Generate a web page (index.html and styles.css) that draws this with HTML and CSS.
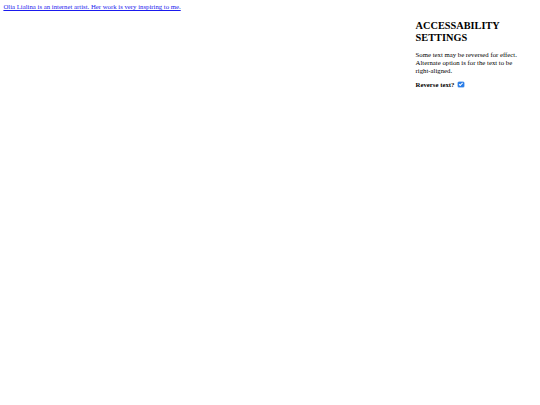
FILE: index.html
```html
<!DOCTYPE html>
<html>
<head>
<meta charset="utf-8">
<link rel="stylesheet" href="styles.css">
</head>
<body>
<div class="page">
  <main class="content">
    <a class="link" href="#">Olia Lialina is an internet artist. Her work is very inspiring to me.</a>
  </main>
  <aside class="settings">
    <h2 class="title">ACCESSABILITY SETTINGS</h2>
    <p class="desc">Some text may be reversed for effect. Alternate option is for the text to be right-aligned.</p>
    <label class="option">Reverse text? <input class="check" type="checkbox" checked></label>
  </aside>
</div>
</body>
</html>
```
FILE: styles.css
```css
html, body {
  margin: 0;
  padding: 0;
  background: #fff;
}
body {
  font-family: "Liberation Serif", "Times New Roman", serif;
  font-size: 6.75px;
  color: #000;
}
.page {
  display: flex;
  padding: 3.4px;
  gap: 10px;
}
.content {
  flex: 1;
}
.link {
  color: #1a1aee;
  text-decoration: underline;
}
.settings {
  width: 108px;
  margin-right: 13px;
  padding-top: 17px;
}
.title {
  font-size: 10.3px;
  font-weight: bold;
  margin: 0 0 7px;
  line-height: 1.15;
}
.desc {
  margin: 0 0 6px;
  line-height: 8px;
}
.option {
  font-weight: bold;
  display: flex;
  align-items: center;
  gap: 3px;
}
.check {
  -webkit-appearance: none;
  appearance: none;
  position: relative;
  width: 5.5px;
  height: 5.5px;
  margin: 0 0 0 1px;
  border-radius: 1px;
  background: #2a7de8;
  box-shadow: 0 0 0 0.5px #5a9ae8;
}
.check::after {
  content: "";
  position: absolute;
  left: 1.7px;
  top: 0.6px;
  width: 1.3px;
  height: 2.6px;
  border: solid #fff;
  border-width: 0 0.9px 0.9px 0;
  transform: rotate(45deg);
}
```
